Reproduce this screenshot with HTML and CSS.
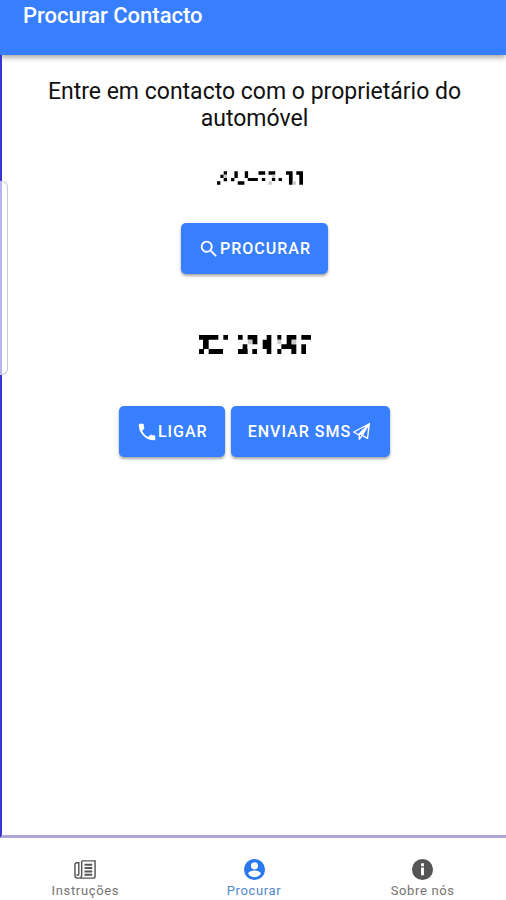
FILE: index.html
```html
<!DOCTYPE html>
<html lang="pt">
<head>
<meta charset="utf-8">
<meta name="viewport" content="width=device-width, initial-scale=1">
<title>Procurar Contacto</title>
<link rel="stylesheet" href="styles.css">
</head>
<body>
<header class="toolbar"><h1 class="toolbar-title">Procurar Contacto</h1></header>
<main class="content">
  <div class="edge-handle"></div>
  <h2 class="heading">Entre em contacto com o proprietário do automóvel</h2>
  <svg class="plate" viewBox="0 0 260 40" aria-hidden="true">
    <path d="M20 0h10v10h-10zM52 0h10v20h-10zM83 0h10v20h-10zM124 0h20v10h-20zM154 0h20v10h-20zM206 0h20v10h-20zM237 0h10v10h-10zM10 10h10v10h-10zM20 20h10v10h-10zM42 20h10v10h-10zM92 20h30v9h-30zM134 20h10v9h-10zM164 20h10v9h-10zM184 20h10v9h-10zM215 10h11v30h-11zM246 0h11v40h-11zM0 30h10v10h-10zM62 30h20v10h-20z"/>
    <path class="faint" d="M20 10h10v10h-10zM164 10h10v10h-10zM154 30h10v10h-10zM226 30h10v10h-10z"/>
  </svg>
  <button class="button" type="button">
    <svg class="icon" viewBox="0 0 24 24" aria-hidden="true"><path d="M15.5 14h-.79l-.28-.27A6.5 6.5 0 1 0 13.73 14.43l.27.28v.79l5 4.99L20.49 19zm-6 0a4.5 4.5 0 1 1 0-9 4.5 4.5 0 0 1 0 9z"/></svg>PROCURAR
  </button>
  <svg class="phone" viewBox="0 0 336 57" aria-hidden="true">
    <path d="M0 0h58v14h-58zM73 0h14v14h-14zM117 0h14v14h-14zM146 0h29v14h-29zM203 0h14v57h-14zM235 0h12v14h-12zM263 0h29v14h-29zM307 0h29v14h-29zM12 14h17v28h-17zM160 14h15v14h-15zM191 14h14v28h-14zM263 14h15v14h-15zM131 28h14v14h-14zM247 28h45v14h-45zM307 28h14v29h-14zM0 42h15v15h-15zM29 42h43v15h-43zM117 42h29v15h-29zM160 42h14v15h-14zM235 42h12v15h-12zM277 42h15v15h-15z"/>
    <path class="faint" d="M146 14h14v14h-14zM235 14h12v14h-12zM278 14h14v14h-14z"/>
  </svg>
  <div class="actions">
    <button class="button" type="button">
      <svg class="icon" viewBox="0 0 24 24" aria-hidden="true"><path d="M6.62 10.79a15.15 15.15 0 0 0 6.59 6.59l2.2-2.2a1 1 0 0 1 1.02-.24 11.4 11.4 0 0 0 3.57.57 1 1 0 0 1 1 1V20a1 1 0 0 1-1 1A17 17 0 0 1 3 4a1 1 0 0 1 1-1h3.5a1 1 0 0 1 1 1c0 1.25.2 2.45.57 3.57a1 1 0 0 1-.25 1.02z"/></svg>LIGAR
    </button>
    <button class="button" type="button">
      ENVIAR SMS<svg class="icon line" viewBox="0 0 24 24" aria-hidden="true"><path d="M20 3 3 12l5 3zM20 3 9 15v5l3-4zM20 3l-2 16-7-4z"/></svg>
    </button>
  </div>
</main>
<nav class="tabs">
  <a class="tab" href="#instrucoes">
    <svg class="tab-icon paper" viewBox="0 0 24 24" aria-hidden="true"><path d="M8 3h14v16a2 2 0 0 1-2 2H4a3 3 0 0 1-3-3V7a2 2 0 0 1 2-2h2v12a1 1 0 0 1-2 0M8 3v15a3 3 0 0 1-2 3"/><path class="bold" d="M11 7h8M11 10.500h8M11 14h8M11 17.500h8"/></svg>
    <span>Instruções</span>
  </a>
  <a class="tab active" href="#procurar" aria-current="page">
    <svg class="tab-icon" viewBox="0 0 24 24" aria-hidden="true"><path d="M12 1a11 11 0 1 0 0 22 11 11 0 0 0 0-22zm0 3.500a3.700 3.700 0 1 1 0 7.400 3.700 3.700 0 0 1 0-7.400zm0 15.500a8 8 0 0 1-6.600-3.500c0-2.200 4.400-3.400 6.600-3.400s6.600 1.200 6.600 3.400A8 8 0 0 1 12 20z"/></svg>
    <span>Procurar</span>
  </a>
  <a class="tab" href="#sobre">
    <svg class="tab-icon" viewBox="0 0 24 24" aria-hidden="true"><path d="M12 1a11 11 0 1 0 0 22 11 11 0 0 0 0-22zm1.500 17h-3v-8h3zm0-9.500h-3v-3h3z"/></svg>
    <span>Sobre nós</span>
  </a>
</nav>
</body>
</html>
```
FILE: styles.css
```css
* { box-sizing: border-box; }
body {
  margin: 0;
  min-height: 100vh;
  display: flex;
  flex-direction: column;
  background: #fff;
  color: #111;
  font-family: Roboto, sans-serif;
}
.toolbar {
  position: relative;
  padding: 2px 23px 25px;
  background: #387fff;
  color: #fff;
  box-shadow: 0 2px 6px rgba(0, 0, 0, 0.4);
}
.toolbar-title {
  margin: 0;
  font-size: 22px;
  line-height: 28px;
  font-weight: 500;
}
.content {
  position: relative;
  flex: 1;
  display: flex;
  flex-direction: column;
  align-items: center;
  padding: 23px 32px 24px 33px;
  border-left: 2px solid #3b36cf;
  border-bottom: 3px solid #aaa8d2;
}
.edge-handle {
  position: absolute;
  left: -2px;
  top: 126px;
  width: 8px;
  height: 194px;
  background: linear-gradient(to right, #b9b4ee 2px, #fff 2px);
  border: 1px solid #c5cad2;
  border-left: 0;
  border-radius: 0 6px 6px 0;
}
.heading {
  margin: 0;
  font-size: 23px;
  line-height: 27px;
  font-weight: 400;
  text-align: center;
}
.plate {
  width: 87px;
  height: 14px;
  margin: 39px 0 38px 12px;
}
.phone {
  width: 114px;
  height: 19px;
  margin: 61px 0 52px;
}
.faint { fill: #ccc; }
.actions { display: flex; gap: 6px; }
.button {
  display: flex;
  align-items: center;
  height: 51px;
  padding: 0 17px;
  border: 0;
  border-radius: 5px;
  background: #387fff;
  color: #fff;
  font-family: inherit;
  font-size: 16px;
  font-weight: 500;
  letter-spacing: 1px;
  box-shadow: 0 2px 3px rgba(0, 0, 0, 0.35);
}
.icon {
  width: 22px;
  height: 22px;
  fill: currentColor;
}
.line {
  fill: none;
  stroke: currentColor;
  stroke-width: 1.5;
  stroke-linejoin: round;
}
.tabs {
  display: flex;
  height: 62px;
}
.tab {
  flex: 1;
  display: flex;
  flex-direction: column;
  align-items: center;
  padding: 20px 0 0 2px;
  color: #747474;
  font-size: 13px;
  line-height: 20px;
  text-decoration: none;
}
.tab span { letter-spacing: 0.05em; }
.tab-icon {
  flex: none;
  width: 23px;
  height: 23px;
  fill: #555;
}
.paper {
  fill: none;
  stroke: #555;
  stroke-width: 1.5;
}
.bold { stroke-width: 2; }
.active { color: #5088cc; }
.active .tab-icon { fill: #2878ee; }
```
